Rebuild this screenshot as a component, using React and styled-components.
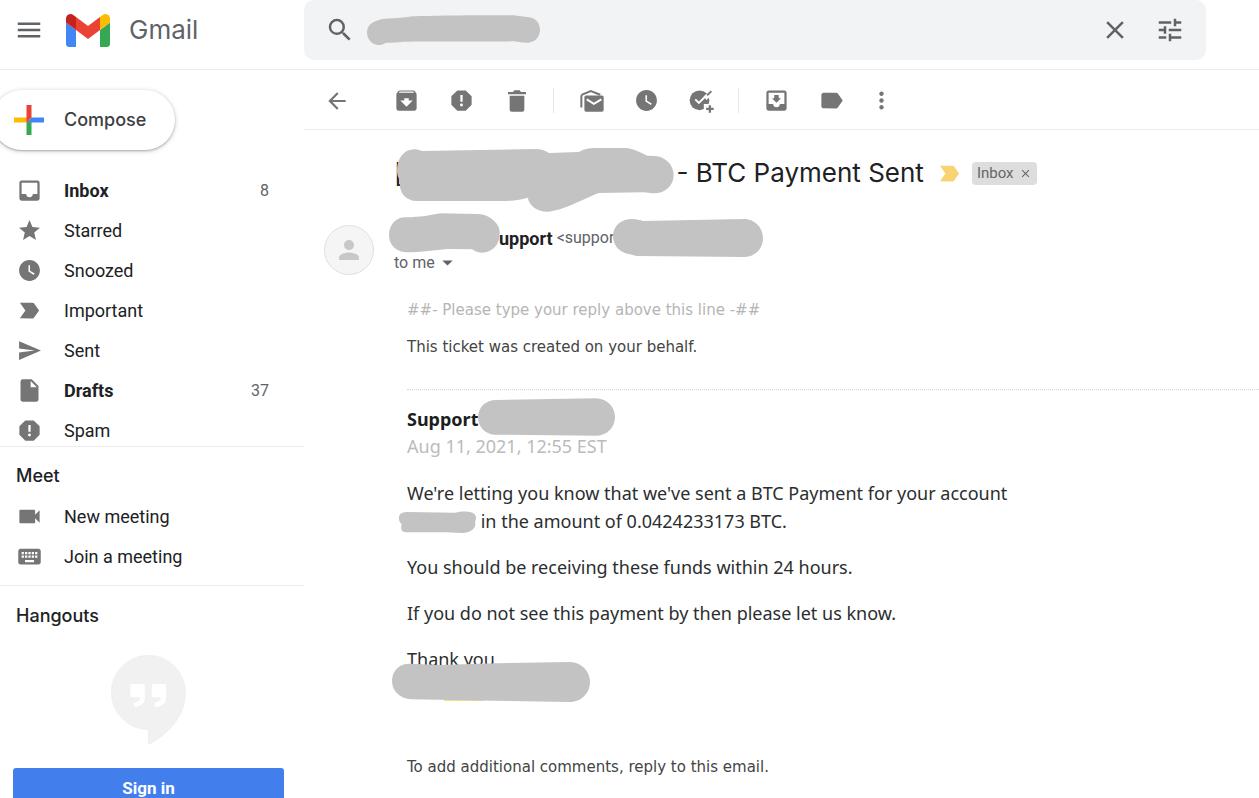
import React from "react";
import styled, { createGlobalStyle, css } from "styled-components";
import {
  MdMenu, MdSearch, MdClose, MdTune, MdArrowBack, MdArchive, MdReport, MdWatchLater,
  MdMoveToInbox, MdLabel, MdMoreVert, MdInbox, MdStar, MdLabelImportant, MdSend,
  MdInsertDriveFile, MdVideocam, MdKeyboard, MdPerson, MdArrowDropDown,
} from "react-icons/md";

const display = `Inter, "Liberation Sans", sans-serif`;
const ui = `Roboto, "Liberation Sans", sans-serif`;
const message = `"Noto Sans", "Open Sans", sans-serif`;
const notice = `"DejaVu Sans", sans-serif`;
const line = "#ebebeb";

const GlobalStyle = createGlobalStyle`
  *, *::before, *::after { box-sizing: border-box; }
  body { margin: 0; background: #fff; color: #202124; font-family: ${ui}; }
  button { border: 0; padding: 0; background: none; color: inherit; font: inherit; cursor: pointer; }
  a { color: inherit; text-decoration: none; }
  h1, h2, h3, p, ul { margin: 0; padding: 0; }
  svg { display: block; flex: none; }
`;

const Page = styled.div`
  display: grid;
  grid-template-columns: 304px minmax(0, 1fr);
  grid-template-rows: 70px minmax(0, 1fr);
  height: 100vh;
  overflow: hidden;
`;

const Header = styled.header`
  grid-column: 1 / -1;
  display: grid;
  grid-template-columns: subgrid;
  align-items: start;
  border-bottom: 1px solid ${line};
`;

const Brand = styled.div`
  display: flex;
  align-items: center;
  height: 60px;
  padding-left: 14px;
  color: #5f6368;
`;

const LogoLink = styled.a`
  display: flex;
  align-items: center;
  gap: 19px;
  margin-left: 22px;
  font: 400 26px/36px ${display};
`;

const SearchBar = styled.form`
  display: flex;
  align-items: center;
  height: 60px;
  margin-right: 53px;
  padding: 0 21px;
  border-radius: 10px;
  background: #f1f3f4;
  color: #5f6368;
`;

const SearchField = styled.div`
  position: relative;
  flex: 1;
  margin-left: 12px;
`;

const SearchInput = styled.input`
  display: block;
  width: 100%;
  border: 0;
  outline: 0;
  background: none;
  font: 400 18px/30px ${ui};
`;

const BarButton = styled.button`
  display: flex;
  margin-left: ${(p) => p.$gap || 0}px;
`;

const Sidebar = styled.aside`
  padding-top: 20px;
  overflow: hidden;
`;

const ComposeButton = styled.button`
  display: flex;
  align-items: center;
  gap: 20px;
  height: 60px;
  margin: 0 0 20px -8px;
  padding: 0 29px 0 22px;
  border-radius: 30px;
  background: #fff;
  box-shadow: 0 1px 2px rgba(60, 64, 67, 0.35), 0 1px 4px 1px rgba(60, 64, 67, 0.16);
  color: #3c4043;
  font: 500 18px/24px ${display};
`;

const FolderList = styled.ul`
  list-style: none;
  overflow: hidden;
  ${(p) => p.$clipped && css`height: 276px;`}
`;

const FolderLink = styled.a`
  display: grid;
  grid-template-columns: 27px 1fr auto;
  align-items: center;
  column-gap: 21px;
  height: 40px;
  padding: 0 35px 0 16px;
  font-size: 18px;
  font-weight: ${(p) => (p.$unread ? 700 : 400)};

  svg { justify-self: center; color: #757575; }
`;

const Count = styled.span`
  color: #5f6368;
  font-size: 16px;
  font-weight: 400;
`;

const SideSection = styled.section`
  padding: ${(p) => p.$pad};
  border-top: 1px solid ${line};
`;

const SideHeading = styled.h2`
  padding: 0 0 8px 16px;
  font: 500 18px/24px ${display};
`;

const HangoutsPanel = styled.div`
  display: flex;
  flex-direction: column;
  align-items: center;
  gap: 23px;
  padding: 19px 20px 0 13px;
`;

const SignIn = styled.button`
  width: 100%;
  height: 40px;
  border-radius: 3px;
  background: #427fed;
  color: #fff;
  font-size: 17px;
  font-weight: 700;
`;

const Main = styled.main`
  min-width: 0;
  overflow: hidden;
`;

const Toolbar = styled.div`
  display: flex;
  align-items: center;
  height: 60px;
  padding: 2px 0 0 5px;
  border-bottom: 1px solid ${line};
  color: #757575;
`;

const ToolButton = styled.button`
  display: flex;
  align-items: center;
  justify-content: center;
  width: ${(p) => (p.$narrow ? 45 : 55)}px;
  height: 40px;
  margin-right: ${(p) => p.$after || 0}px;
`;

const Divider = styled.span`
  width: 1px;
  height: 25px;
  margin: 0 10px 0 9px;
  background: #e6e6e6;
`;

const SubjectRow = styled.div`
  display: flex;
  align-items: center;
  height: 50px;
  margin-top: 18px;
  padding-left: 90px;
`;

const Subject = styled.h1`
  display: flex;
  align-items: center;
  font: 400 26px/36px ${display};
  white-space: pre;
`;

const Importance = styled.span`
  margin: 0 9px 0 12px;
  color: #f8d373;
`;

const LabelChip = styled.button`
  display: flex;
  align-items: center;
  gap: 5px;
  height: 23px;
  padding: 0 5px;
  border-radius: 4px;
  background: #ddd;
  color: #666;
  font: 400 15px/23px ${ui};
`;

const SenderRow = styled.div`
  display: flex;
  gap: 20px;
  margin-top: 27px;
  padding-left: 20px;
`;

const Avatar = styled.div`
  display: flex;
  align-items: center;
  justify-content: center;
  width: 50px;
  height: 50px;
  border: 1px solid #e0e0e0;
  border-radius: 50%;
  background: #f5f5f5;
  color: #c8c8c8;
`;

const SenderLine = styled.div`
  display: flex;
  align-items: center;
  height: 25px;
  color: #5f6368;
  font-size: 16px;
`;

const SenderName = styled.strong`
  margin-right: 4px;
  color: #202124;
  font-size: 18px;
`;

const Recipient = styled.button`
  display: flex;
  align-items: center;
  height: 25px;
  color: #5f6368;
  font-size: 16px;
`;

const Hidden = styled.span`
  position: relative;
  display: inline-block;
  width: ${(p) => p.$w}px;
  height: 1em;
`;

const Mark = styled.svg`
  position: absolute;
  left: ${(p) => p.$x}px;
  top: ${(p) => p.$y}px;
  fill: #c3c3c3;
`;

const Message = styled.article`
  padding-left: 103px;
`;

const Notice = styled.p`
  margin-top: ${(p) => p.$top}px;
  color: ${(p) => (p.$faint ? "#b5b5b5" : "#444")};
  font: 400 15px/22px ${notice};
`;

const Comment = styled.section`
  margin-top: 31px;
  padding-top: 15px;
  border-top: 1px dotted #d4d4d4;
  font: 400 18px/28px ${message};
  color: #2b2e2f;
`;

const Author = styled.h3`
  display: flex;
  align-items: center;
  color: #1b1d1e;
  font: 700 18px/28px ${message};
`;

const DateLine = styled.p`
  color: #bbb;
  font: 400 18px/26px ${message};
`;

const Paragraph = styled.p`
  margin-top: ${(p) => p.$top || 18}px;
`;

const SignatureLine = styled.span`
  position: relative;
  display: flex;
  align-items: center;
  height: 28px;
`;

const Highlight = styled.span`
  width: 40px;
  height: 28px;
  margin: 0 95px 0 37px;
  background: #fbdc83;
`;

function Redaction({ w, x, y, width, height, viewBox, d }) {
  return (
    <Hidden $w={w}>
      <Mark $x={x} $y={y} width={width} height={height} viewBox={viewBox} preserveAspectRatio="none" aria-hidden="true">
        <path d={d} />
      </Mark>
    </Hidden>
  );
}

const GmailLogo = () => (
  <svg width="44" height="33" viewBox="52 42 88 66" aria-hidden="true">
    <path fill="#4285f4" d="M58 108h14V74L52 59v43c0 3.32 2.69 6 6 6" />
    <path fill="#34a853" d="M120 108h14c3.32 0 6-2.69 6-6V59l-20 15" />
    <path fill="#fbbc04" d="M120 48v26l20-15v-8c0-7.42-8.47-11.65-14.4-7.2" />
    <path fill="#ea4335" d="M72 74V48l24 18 24-18v26L96 92" />
    <path fill="#c5221f" d="M52 51v8l20 15V48l-5.6-4.2c-5.94-4.45-14.4-.22-14.4 7.2" />
  </svg>
);

const PlusIcon = () => (
  <svg width="30" height="30" viewBox="6 6 24 24" aria-hidden="true">
    <path fill="#34a853" d="M16 16v14h4V20z" />
    <path fill="#4285f4" d="M30 16H20l-4 4h14z" />
    <path fill="#fbbc05" d="M6 16v4h10l4-4z" />
    <path fill="#ea4335" d="M20 16V6h-4v14z" />
  </svg>
);

const TrashIcon = () => (
  <svg width="18" height="22" viewBox="611 268 54 66" fill="currentColor" aria-hidden="true">
    <path d="M611 274h15l4-5h16l4 5h15v7h-54zM616 285h44v42q0 6-6 6h-32q-6 0-6-6z" />
  </svg>
);

const UnreadIcon = () => (
  <svg width="24" height="23" viewBox="59 85 71 68" fill="none" stroke="currentColor" aria-hidden="true">
    <path strokeWidth="6" d="M63 140V108q0-5 4-7l24-10 28 11" />
    <rect x="72" y="104" width="57" height="48" rx="5" fill="currentColor" stroke="none" />
    <path stroke="#fff" strokeWidth="6" d="M79 116l21 13 22-13" />
  </svg>
);

const AddTaskIcon = () => (
  <svg width="25" height="24" viewBox="388 88 76 72" fill="none" aria-hidden="true">
    <circle cx="420" cy="122" r="30" fill="currentColor" />
    <path stroke="#fff" strokeWidth="13" d="M437 116l24-24" />
    <path stroke="#fff" strokeWidth="6" d="M407 119l11 11 25-25" />
    <path stroke="currentColor" strokeWidth="6" d="M443 107l13-13" />
    <path fill="#fff" d="M433 133h31v27h-31z" />
    <path stroke="currentColor" strokeWidth="7" d="M440 148h23M451.500 137v23" />
  </svg>
);

const HangoutsLogo = () => (
  <svg width="75" height="90" viewBox="332 164 226 272" aria-hidden="true">
    <path fill="#f1f1f1" stroke="#ececec" strokeWidth="2" d="M444.500 165a112 112 0 0 1 112 112c0 74-56 130-112 157v-45a112 112 0 0 1 0-224z" />
    <path fill="#fff" d="M396 252h33q5 0 5 6v35q0 26-33 28v-13q17-1 19-16h-24q-6 0-6-6v-28q0-6 6-6zM460 252h32q6 0 6 6v35q0 26-34 28v-13q17-1 19-16h-23q-5 0-5-6v-28q0-6 5-6z" />
  </svg>
);

const folders = [
  { name: "Inbox", icon: <MdInbox size={27} />, count: 8, unread: true },
  { name: "Starred", icon: <MdStar size={25} /> },
  { name: "Snoozed", icon: <MdWatchLater size={25} /> },
  { name: "Important", icon: <MdLabelImportant size={27} /> },
  { name: "Sent", icon: <MdSend size={25} /> },
  { name: "Drafts", icon: <MdInsertDriveFile size={27} />, count: 37, unread: true },
  { name: "Spam", icon: <MdReport size={27} /> },
];

const meetings = [
  { name: "New meeting", icon: <MdVideocam size={27} /> },
  { name: "Join a meeting", icon: <MdKeyboard size={27} /> },
];

function Folders({ items, clipped }) {
  return (
    <FolderList $clipped={clipped}>
      {items.map((f) => (
        <li key={f.name}>
          <FolderLink href="#" $unread={f.unread}>
            {f.icon}
            <span>{f.name}</span>
            {f.count && <Count>{f.count}</Count>}
          </FolderLink>
        </li>
      ))}
    </FolderList>
  );
}

export default function App() {
  return (
    <>
      <GlobalStyle />
      <Page>
        <Header>
          <Brand>
            <button aria-label="Main menu"><MdMenu size={30} /></button>
            <LogoLink href="#"><GmailLogo />Gmail</LogoLink>
          </Brand>
          <SearchBar onSubmit={(e) => e.preventDefault()}>
            <BarButton aria-label="Search"><MdSearch size={30} /></BarButton>
            <SearchField>
              <SearchInput aria-label="Search mail" />
              <Mark $x={0} $y={1} width="173" height="30" viewBox="189 45 519 91" preserveAspectRatio="none" aria-hidden="true">
                <path d="M189 98C189 76 205 65 225 60C240 54 290 56 325 49C400 46 560 45 630 46C655 50 665 51 675 52C695 54 708 70 708 90C708 112 692 129 672 129C655 129 645 127 630 125C500 126 350 124 300 126C280 129 262 129 246 129C238 134 232 136 224 136C204 136 189 118 189 98Z" />
              </Mark>
            </SearchField>
            <BarButton type="button" aria-label="Clear search"><MdClose size={30} /></BarButton>
            <BarButton type="button" $gap={25} aria-label="Search options"><MdTune size={30} /></BarButton>
          </SearchBar>
        </Header>

        <Sidebar>
          <ComposeButton><PlusIcon />Compose</ComposeButton>
          <Folders items={folders} clipped />
          <SideSection $pad="17px 0 9px">
            <SideHeading>Meet</SideHeading>
            <Folders items={meetings} />
          </SideSection>
          <SideSection $pad="18px 0 0">
            <SideHeading>Hangouts</SideHeading>
            <HangoutsPanel>
              <HangoutsLogo />
              <SignIn>Sign in</SignIn>
            </HangoutsPanel>
          </SideSection>
        </Sidebar>

        <Main>
          <Toolbar>
            <ToolButton $after={15} aria-label="Back"><MdArrowBack size={26} /></ToolButton>
            <ToolButton aria-label="Archive"><MdArchive size={27} /></ToolButton>
            <ToolButton aria-label="Report spam"><MdReport size={27} /></ToolButton>
            <ToolButton aria-label="Delete"><TrashIcon /></ToolButton>
            <Divider />
            <ToolButton aria-label="Mark as unread"><UnreadIcon /></ToolButton>
            <ToolButton aria-label="Snooze"><MdWatchLater size={25} /></ToolButton>
            <ToolButton aria-label="Add to tasks"><AddTaskIcon /></ToolButton>
            <Divider />
            <ToolButton aria-label="Move to"><MdMoveToInbox size={27} /></ToolButton>
            <ToolButton aria-label="Labels"><MdLabel size={27} /></ToolButton>
            <ToolButton $narrow aria-label="More"><MdMoreVert size={27} /></ToolButton>
          </Toolbar>

          <SubjectRow>
            <Subject>
              [
              <Redaction w={273} x={-6} y={-12} width={277} height={64} viewBox="280 54 830 192"
                d="M280 118C282 85 300 58 332 58C345 58 348 62 355 63L700 57C715 58 725 62 735 69L825 66C840 57 855 54 870 54L965 54C990 56 1005 66 1030 77L1052 78C1085 80 1109 105 1109 135C1109 166 1085 190 1050 190C1038 190 1030 188 1018 187L885 189C850 200 790 238 735 245C700 247 675 225 672 203C655 208 635 212 600 213L340 213C305 212 285 188 288 150C281 138 280 130 280 118Z" />
              - BTC Payment Sent
            </Subject>
            <Importance><MdLabelImportant size={27} /></Importance>
            <LabelChip>Inbox <MdClose size={13} /></LabelChip>
          </SubjectRow>

          <SenderRow>
            <Avatar><MdPerson size={30} /></Avatar>
            <div>
              <SenderLine>
                <SenderName>
                  <Redaction w={105} x={-5} y={-14} width={111} height={40} viewBox="255 249 334 120"
                    d="M255 315C255 285 275 262 305 262C350 262 380 255 410 250L520 252C545 252 560 262 572 274C585 285 589 298 588 313C588 345 565 368 535 368C520 368 512 362 505 358L430 357C395 360 350 367 310 367C278 367 255 345 255 315Z" />
                  upport
                </SenderName>
                &lt;suppor
                <Redaction w={150} x={-1} y={-11} width={150} height={39} viewBox="613 219 150 39"
                  d="M613 236C613 226 621 219 632 219C637 219 640 220 643 221L744 219C755 219 763 228 763 238C763 249 755 257 744 257L638 256C634 256 631 254 628 254C619 252 613 245 613 236Z" />
              </SenderLine>
              <Recipient>to me <MdArrowDropDown size={25} /></Recipient>
            </div>
          </SenderRow>

          <Message>
            <Notice $top={24} $faint>##- Please type your reply above this line -##</Notice>
            <Notice $top={15}>This ticket was created on your behalf.</Notice>
            <Comment>
              <Author>
                Support
                <Redaction w={137} x={0} y={-12} width={137} height={38} viewBox="296 324 412 115"
                  d="M296 381C298 350 320 330 350 330L650 325C683 325 708 350 708 382C708 414 683 438 650 438L345 435C318 434 296 412 296 381Z" />
              </Author>
              <DateLine>Aug 11, 2021, 12:55 EST</DateLine>
              <Paragraph $top={20}>
                We're letting you know that we've sent a BTC Payment for your account<br />
                <Redaction w={69} x={-8} y={1} width={77} height={22} viewBox="57 127 230 67"
                  d="M57 146C58 135 66 131 80 130L225 132C240 128 260 127 272 131C283 134 288 142 287 150C283 160 286 165 284 174C277 188 262 194 240 194L200 192L80 192C66 192 60 184 65 168C58 160 56 154 57 146Z" />
                {" "}in the amount of 0.0424233173 BTC.
              </Paragraph>
              <Paragraph>You should be receiving these funds within 24 hours.</Paragraph>
              <Paragraph>If you do not see this payment by then please let us know.</Paragraph>
              <Paragraph>
                Thank you
                <SignatureLine>
                  <Highlight />
                  <span>l</span>
                  <Mark $x={-15} $y={-11} width="198" height="40" viewBox="37 96 593 120" preserveAspectRatio="none" aria-hidden="true">
                    <path d="M37 153C37 122 60 100 90 101L180 105L350 100L570 96C605 97 630 124 630 156C630 190 603 216 570 216L95 208C62 206 37 184 37 153Z" />
                  </Mark>
                </SignatureLine>
              </Paragraph>
            </Comment>
            <Notice $top={55}>To add additional comments, reply to this email.</Notice>
          </Message>
        </Main>
      </Page>
    </>
  );
}
